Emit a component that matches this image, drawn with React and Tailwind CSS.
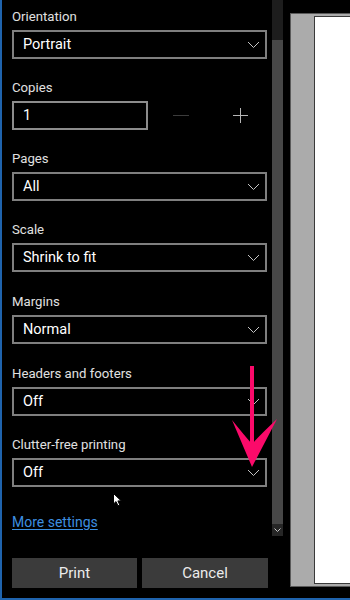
import { Fragment } from 'react';

const fields = [
  { label: 'Orientation', value: 'Portrait' },
  { label: 'Copies', value: '1', type: 'copies' },
  { label: 'Pages', value: 'All' },
  { label: 'Scale', value: 'Shrink to fit' },
  { label: 'Margins', value: 'Normal' },
  { label: 'Headers and footers', value: 'Off' },
  { label: 'Clutter-free printing', value: 'Off' },
];

// rows 4 and 5 sit one pixel lower in the original
const GAPS = ['', 'mt-[19px]', 'mt-[19px]', 'mt-[19px]', 'mt-[20px]', 'mt-[20px]', 'mt-[19px]'];

function Chevron({ className = '' }) {
  return (
    <svg width="13" height="8" viewBox="0 0 13 8" className={className}>
      <polyline points="1,1 6.5,6.5 12,1" fill="none" stroke="#c4c4c4" strokeWidth="1" />
    </svg>
  );
}

function Select({ value }) {
  return (
    <div className="mt-[3px] h-[29px] w-[255px] border-2 border-[#7f7f7f] flex items-center pl-[9px] pr-[5px]">
      <span className="flex-1 text-[14.5px] text-white">{value}</span>
      <Chevron />
    </div>
  );
}

function CopiesRow({ value }) {
  return (
    <div className="mt-[3px] flex items-center h-[29px]">
      <div className="h-[29px] w-[136px] border-2 border-[#8c8c8c] flex items-center pl-[9px]">
        <span className="text-[14.5px] text-white">{value}</span>
      </div>
      <div className="ml-[25px] w-[16px] h-[1px] bg-[#3c3c3c]" />
      {/* plus */}
      <svg width="15" height="15" viewBox="0 0 15 15" className="ml-[44px]">
        <path d="M7.5 0 V15 M0 7.5 H15" stroke="#b5b5b5" strokeWidth="1" />
      </svg>
    </div>
  );
}

export default function App() {
  return (
    <div className="w-[350px] h-[600px] bg-black flex flex-col overflow-hidden" style={{ fontFamily: 'Roboto, "Noto Sans", sans-serif' }}>
      <div className="relative flex-1 flex border-l-2 border-[#1f63ad] min-h-0">
        {/* settings pane */}
        <div className="w-[270px] flex flex-col pl-[10px] pt-[7px]">
          {fields.map((f, i) => (
            <Fragment key={f.label}>
              <div className={`h-[20px] leading-[20px] text-[13.2px] text-[#e0e0e0] ${GAPS[i]}`}>{f.label}</div>
              {f.type === 'copies' ? <CopiesRow value={f.value} /> : <Select value={f.value} />}
            </Fragment>
          ))}
          <a className="mt-[25px] h-[20px] leading-[20px] text-[14px] text-[#3d8fe0] underline underline-offset-2 w-fit">More settings</a>
          <div className="mt-[26px] flex gap-[5px]">
            <button className="w-[125px] h-[30px] bg-[#3b3b3b] text-[15px] text-[#ececec]">Print</button>
            <button className="w-[126px] h-[30px] bg-[#3b3b3b] text-[15px] text-[#ececec]">Cancel</button>
          </div>
        </div>

        {/* scrollbar */}
        <div className="w-[11px] flex flex-col">
          <div className="h-[40px] bg-[#1d1d1d]" />
          <div className="h-[484px] bg-[#474747]" />
          <div className="h-[12px] bg-[#262626] flex items-center justify-center">
            <svg width="7" height="4" viewBox="0 0 7 4">
              <polyline points="0.5,0.5 3.5,3.5 6.5,0.5" fill="none" stroke="#c8c8c8" strokeWidth="1" />
            </svg>
          </div>
        </div>

        {/* preview */}
        <div className="flex-1 pl-[7px] pt-[13px] pb-[11px]">
          <div className="h-full bg-[#ababab] border border-[#5a5a5a] border-r-0 pl-[23px] pt-[2px] pb-[2px]">
            <div className="h-full bg-white border border-[#3a3a3a] border-r-0" />
          </div>
        </div>

        {/* annotation arrow */}
        <svg className="absolute pointer-events-none" style={{ left: 223, top: 360 }} width="55" height="110" viewBox="0 0 55 110">
          <rect x="25" y="6" width="4" height="86" fill="#fb0a6a" />
          <path d="M27 107 L7 60 Q19 75 27 84 Q35 75 52 59 Z" fill="#fb0a6a" />
        </svg>

        {/* mouse cursor */}
        <svg className="absolute pointer-events-none" style={{ left: 111, top: 493 }} width="10" height="14" viewBox="0 0 10 14">
          <path d="M0.5 0.5 L0.5 11 L3 8.6 L5 12.8 L6.8 12 L4.9 7.9 L8.3 7.9 Z" fill="#fff" stroke="#000" strokeWidth="1" />
        </svg>
      </div>
      <div className="h-[2px] bg-[#1f63ad]" />
    </div>
  );
}
